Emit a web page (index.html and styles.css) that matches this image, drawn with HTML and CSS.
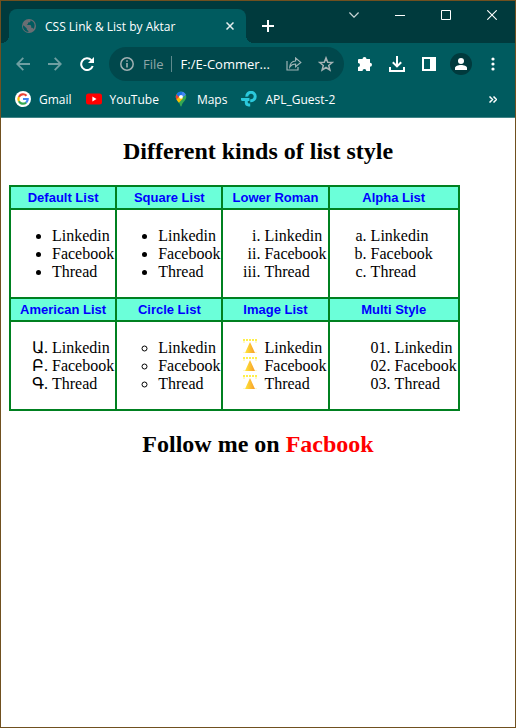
FILE: index.html
```html
<!DOCTYPE html>
<html lang="en">
<head>
<meta charset="utf-8">
<meta name="viewport" content="width=device-width, initial-scale=1">
<title>CSS Link &amp; List by Aktar</title>
<link rel="stylesheet" href="styles.css">
</head>
<body>
<div class="window">
  <header class="chrome">
    <div class="tab-strip">
      <div class="tab">
        <svg class="tab-icon" width="14" height="14" viewBox="0 0 14 14"><circle cx="7" cy="7" r="7" fill="#6a6e73"/><path d="M1.4 6.2 4.8 9.4v1.2L6.4 12v1C3.400 12.800 1 10.300 1 7.200zM8.500 1.300v1.100L7.300 3.600H6v1.200L4.800 6H8.400l.8 1v1.800h1.300l1 1.200C13.600 7 12.800 2.800 8.500 1.300z" fill="#005b5f"/></svg>
        <span class="tab-title">CSS Link &amp; List by Aktar</span>
        <button class="tab-close" aria-label="Close tab"><svg width="8" height="8" viewBox="0 0 8 8"><path d="M.5.5l7 7M7.500.5l-7 7" stroke="#e4eeee" stroke-width="1.500"/></svg></button>
      </div>
      <button class="new-tab" aria-label="New tab"><svg width="12" height="12" viewBox="0 0 12 12"><path d="M6 0v12M0 6h12" stroke="#fff" stroke-width="2"/></svg></button>
      <div class="window-controls">
        <button aria-label="Search tabs"><svg width="10" height="6" viewBox="0 0 10 6"><path d="M.4.5 5 5.200 9.600.5" fill="none" stroke="#c9d6d7" stroke-width="1.200"/></svg></button>
        <button aria-label="Minimize"><svg width="10" height="10" viewBox="0 0 10 10"><path d="M0 5.500h10" stroke="#fff"/></svg></button>
        <button aria-label="Maximize"><svg width="10" height="10" viewBox="0 0 10 10"><path d="M.5.5h9v9h-9z" fill="none" stroke="#fff"/></svg></button>
        <button aria-label="Close"><svg width="10" height="10" viewBox="0 0 10 10"><path d="M.3.3l9.400 9.400M9.700.3.3 9.700" stroke="#fff" stroke-width="1.100"/></svg></button>
      </div>
    </div>
    <div class="toolbar">
      <button class="tool" aria-label="Back"><svg width="14" height="14" viewBox="0 0 14 14" fill="none" stroke="#6f9fa2" stroke-width="1.800"><path d="M14 7H1.500M7.300.9 1.200 7l6.100 6.100"/></svg></button>
      <button class="tool" aria-label="Forward"><svg width="14" height="14" viewBox="0 0 14 14" fill="none" stroke="#6f9fa2" stroke-width="1.800"><path d="M0 7h12.500M6.700.9 12.800 7l-6.100 6.100"/></svg></button>
      <button class="tool" aria-label="Reload"><svg width="14" height="14" viewBox="0 0 14 14"><path d="M11.400 3.100A5.900 5.900 0 1 0 12.700 9" fill="none" stroke="#fff" stroke-width="2"/><path d="M14 0v6H8z" fill="#fff"/></svg></button>
      <div class="address">
        <svg width="14" height="14" viewBox="0 0 14 14"><circle cx="7" cy="7" r="6.200" fill="none" stroke="#a0b0b2" stroke-width="1.500"/><path d="M7 6v4.500M7 3.200v1.600" stroke="#a0b0b2" stroke-width="1.600"/></svg>
        <label class="scheme" for="url">File</label>
        <input id="url" class="url" type="text" value="F:/E-Commer...">
        <button class="share" aria-label="Share"><svg width="16" height="14" viewBox="0 0 16 14" fill="none" stroke="#9db4b6" stroke-width="1.200"><path d="M1 4v9h11v-3M3.800 10C4 6.500 6 4.300 9.600 4V1L14.800 5.400 9.600 9.800V7C7 7 5.200 7.800 3.800 10z"/></svg></button>
        <button class="share" aria-label="Bookmark this page"><svg width="16" height="16" viewBox="0 0 16 16"><path d="M8 1.900l1.700 4.300 4.600.3-3.600 3 1.200 4.500L8 11.500 4.100 14l1.200-4.500-3.600-3 4.600-.3z" fill="none" stroke="#a5b3b5" stroke-width="1.500"/></svg></button>
      </div>
      <button class="tool" aria-label="Extensions"><svg width="16" height="16" viewBox="0 0 16 16"><path d="M2 3h3.500a2 2 0 1 1 4 0H13v3.700a2 2 0 1 1 0 4V15H9.300a1.900 1.900 0 0 0-3.800 0H1v-4a2 2 0 0 0 0-4V4a1 1 0 0 1 1-1z" fill="#fff"/></svg></button>
      <button class="tool" aria-label="Downloads"><svg width="16" height="16" viewBox="0 0 16 16" fill="none" stroke="#fff" stroke-width="2"><path d="M8 0v10M3.800 6.200 8 10.400l4.200-4.200M1 11v4h14v-4"/></svg></button>
      <button class="tool" aria-label="Side panel"><svg width="14" height="14" viewBox="0 0 14 14"><path d="M0 0h14v14H0zM2 2v10h6V2z" fill="#fff" fill-rule="evenodd"/></svg></button>
      <button class="tool" aria-label="Profile"><svg width="22" height="22" viewBox="0 0 22 22"><circle cx="11" cy="11" r="11" fill="#003a3d"/><circle cx="11" cy="8" r="3" fill="#fff"/><path d="M5 17v-2c0-2 3-3 6-3s6 1 6 3v2z" fill="#fff"/></svg></button>
      <button class="tool" aria-label="Menu"><svg width="4" height="14" viewBox="0 0 4 14" fill="#fff"><circle cx="2" cy="2" r="1.600"/><circle cx="2" cy="7" r="1.600"/><circle cx="2" cy="12" r="1.600"/></svg></button>
    </div>
    <nav class="bookmarks" aria-label="Bookmarks">
      <a href="#"><svg width="16" height="16" viewBox="0 0 16 16"><circle cx="8" cy="8" r="8" fill="#fff"/><g fill="none" stroke-width="2.200"><path d="M3.900 5.900A4.700 4.700 0 0 1 11.500 4.700" stroke="#ea4335"/><path d="M3.900 5.900a4.700 4.700 0 0 0 0 4.300" stroke="#fbbc05"/><path d="M3.900 10.200a4.700 4.700 0 0 0 7.200 1.400" stroke="#34a853"/><path d="M11.100 11.600A4.700 4.700 0 0 0 12.700 8H8" stroke="#4285f4"/></g></svg>Gmail</a>
      <a href="#"><svg width="16" height="16" viewBox="0 0 16 16"><rect y="2.500" width="16" height="11" rx="2.500" fill="#f00"/><path d="M6.400 5.600v4.800L10.500 8z" fill="#fff"/></svg>YouTube</a>
      <a href="#"><svg width="16" height="16" viewBox="0 0 16 16"><defs><clipPath id="pin"><path d="M8 .5a5.300 5.300 0 0 1 5.300 5.300c0 3.600-3.800 5-4.700 9.300-.1.600-1.100.6-1.200 0-.9-4.300-4.700-5.700-4.700-9.300A5.300 5.300 0 0 1 8 .5z"/></clipPath></defs><g clip-path="url(#pin)"><path d="M0 0h16v16H0z" fill="#34a853"/><path d="M2 2.300 6.500 6l-3.300 4L0 7z" fill="#ea4335"/><path d="M4 1.800 6.500 0H10l2.500 2.500L8 7.500 3.500 3.500z" fill="#1a73e8"/><path d="M9.500 0l4 3-3 3-2-2z" fill="#4285f4"/><path d="M2.500 9.500 7 5l3 2.500-5 5z" fill="#fbbc04"/></g><circle cx="8" cy="5.800" r="1.900" fill="#fff"/></svg>Maps</a>
      <a href="#"><svg width="16" height="16" viewBox="0 0 16 16"><path d="M5.800 5.600A4.200 4.200 0 1 1 10 9.700H9.200" fill="none" stroke="#2bc9dc" stroke-width="3"/><path d="M0 7h8.500v3H6.800v1.200c0 .8.500 1.200 1.200 1.200h1.200v3H7.500c-2.200 0-3.700-1.300-3.700-3.600V10H1.200C.5 10 0 9.500 0 8.800z" fill="#2bc9dc"/></svg>APL_Guest-2</a>
      <button class="more" aria-label="More bookmarks"><svg width="8" height="7" viewBox="0 0 8 7" fill="none" stroke="#fff" stroke-width="1.500"><path d="M.5.5l3 3-3 3M4.500.5l3 3-3 3"/></svg></button>
    </nav>
  </header>
  <main class="page">
    <h2>Different kinds of list style</h2>
    <table class="lists">
      <tr><th>Default List</th><th>Square List</th><th>Lower Roman</th><th>Alpha List</th></tr>
      <tr>
        <td><ul><li>Linkedin</li><li>Facebook</li><li>Thread</li></ul></td>
        <td><ul><li>Linkedin</li><li>Facebook</li><li>Thread</li></ul></td>
        <td><ol class="roman"><li>Linkedin</li><li>Facebook</li><li>Thread</li></ol></td>
        <td><ol class="alpha"><li>Linkedin</li><li>Facebook</li><li>Thread</li></ol></td>
      </tr>
      <tr><th>American List</th><th>Circle List</th><th>Image List</th><th>Multi Style</th></tr>
      <tr>
        <td><ol class="armenian"><li>Linkedin</li><li>Facebook</li><li>Thread</li></ol></td>
        <td><ul class="circle"><li>Linkedin</li><li>Facebook</li><li>Thread</li></ul></td>
        <td><ul class="image"><li>Linkedin</li><li>Facebook</li><li>Thread</li></ul></td>
        <td><ol class="multi"><li>Linkedin</li><li>Facebook</li><li>Thread</li></ol></td>
      </tr>
    </table>
    <h2>Follow me on <a class="follow" href="#">Facbook</a></h2>
  </main>
</div>
</body>
</html>
```
FILE: styles.css
```css
* {
  box-sizing: border-box;
}

body {
  margin: 0;
}

button {
  display: flex;
  align-items: center;
  justify-content: center;
  flex: none;
  padding: 0;
  border: 0;
  background: none;
}

svg {
  display: block;
  flex: none;
}

.window {
  min-height: 100vh;
  border: 1px solid #70501f;
  background: #fff;
}

.chrome {
  background: #005b5f;
  border-bottom: 1px solid #408487;
  color: #fff;
  font-family: "Open Sans", "Noto Sans", sans-serif;
  font-size: 12px;
}

.tab-strip {
  display: flex;
  height: 42px;
  background: #003a3d;
}

.tab {
  position: relative;
  display: flex;
  align-items: center;
  flex: 0 1 237px;
  min-width: 0;
  height: 34px;
  margin: 8px 0 0 8px;
  padding: 0 8px 0 13px;
  border-radius: 8px 8px 0 0;
  background: #005b5f;
}

.tab::before,
.tab::after {
  content: "";
  position: absolute;
  bottom: 0;
  width: 8px;
  height: 8px;
}

.tab::before {
  right: 100%;
  background: radial-gradient(circle at 0 0, #003a3d 8px, #005b5f 8px);
}

.tab::after {
  left: 100%;
  background: radial-gradient(circle at 100% 0, #003a3d 8px, #005b5f 8px);
}

.tab-title {
  flex: 1;
  min-width: 0;
  margin-left: 9px;
  overflow: hidden;
  white-space: nowrap;
}

.tab-close {
  width: 16px;
  height: 16px;
}

.new-tab {
  width: 28px;
  height: 28px;
  margin: 11px 0 0 8px;
}

.window-controls {
  display: flex;
  margin-left: auto;
}

.window-controls button {
  width: 46px;
  height: 28px;
}

.toolbar {
  display: flex;
  align-items: center;
  height: 42px;
  padding: 0 6px;
}

.tool {
  width: 32px;
  height: 32px;
}

.address {
  display: flex;
  align-items: center;
  flex: 1;
  min-width: 0;
  height: 34px;
  margin: 0 5px 0 6px;
  padding: 0 2px 0 11px;
  border-radius: 17px;
  background: #00484c;
  font-size: 13px;
}

.scheme {
  margin-left: 9px;
  padding-right: 7px;
  border-right: 1px solid #5f8a8d;
  color: #8fa6a8;
  line-height: 16px;
}

.url {
  flex: 1;
  min-width: 0;
  margin-left: 9px;
  padding: 0;
  border: 0;
  outline: 0;
  background: none;
  color: #fff;
  font: inherit;
}

.share {
  width: 32px;
  height: 32px;
}

.bookmarks {
  display: flex;
  align-items: center;
  gap: 14px;
  height: 32px;
  padding: 0 18px 4px 14px;
}

.bookmarks a {
  display: flex;
  align-items: center;
  gap: 8px;
  color: #fff;
  text-decoration: none;
}

.more {
  margin-left: auto;
}

.page {
  display: flow-root;
  padding: 0 8px;
  font-family: "Liberation Serif", "Times New Roman", serif;
  font-size: 16px;
}

h2 {
  margin: 20px 0;
  font-size: 24px;
  line-height: 27px;
  text-align: center;
}

.lists {
  border-collapse: collapse;
}

.lists th,
.lists td {
  padding: 1px;
  border: 2px solid #008020;
}

.lists td {
  padding-bottom: 0;
}

.lists th {
  padding-top: 2px;
  background: #6bffd9;
  color: #00f;
  font-family: "Liberation Sans", Arial, sans-serif;
  font-size: 13px;
  line-height: 18px;
}

.lists ul,
.lists ol {
  margin: 16px 0;
  padding-left: 40px;
  line-height: 18px;
}

.lists li {
  height: 18px;
}

.roman {
  list-style: lower-roman;
}

.alpha {
  list-style: lower-alpha;
}

.armenian {
  list-style: armenian;
}

.circle {
  list-style: circle;
}

.image {
  list-style-image: url("data:image/svg+xml,%3Csvg xmlns='http://www.w3.org/2000/svg' width='14' height='14' viewBox='0 0 14 14'%3E%3Cdefs%3E%3ClinearGradient id='g'%3E%3Cstop stop-color='%23ffe838'/%3E%3Cstop offset='1' stop-color='%23f79a2c'/%3E%3C/linearGradient%3E%3C/defs%3E%3Cpath d='M0 1h14' stroke='%23fff04a' stroke-width='2' stroke-dasharray='2 1'/%3E%3Cpath d='M1 2v2M13 2v2M1 13v1M13 13v1' stroke='%23fff48a'/%3E%3Cpath d='M7 3 12 14H2z' fill='url(%23g)'/%3E%3C/svg%3E");
}

.multi {
  list-style: decimal-leading-zero inside;
}

.follow {
  color: #f00;
  text-decoration: none;
}
```
